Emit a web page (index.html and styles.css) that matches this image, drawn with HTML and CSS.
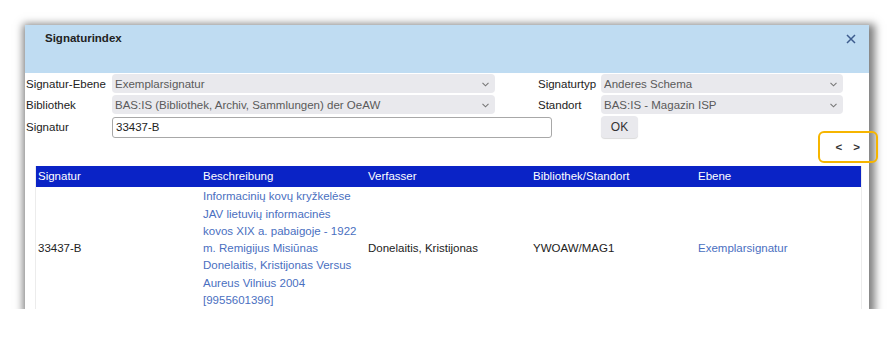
FILE: index.html
```html
<!DOCTYPE html>
<html lang="de">
<head>
    <meta charset="UTF-8">
    <meta name="viewport" content="width=device-width, initial-scale=1.0">
    <title>Signaturindex</title>
    <link rel="stylesheet" href="styles.css">
</head>
<body>
    <div class="dialog">
        <div class="titlebar">
            <span class="title">Signaturindex</span>
            <svg class="close" width="10" height="10" viewBox="0 0 10 10"><path d="M1 1L9 9M9 1L1 9"/></svg>
        </div>

        <form class="search">
            <div class="row">
                <label class="label label-left" for="ebene">Signatur-Ebene</label>
                <div class="select select-left">
                    <select id="ebene"><option>Exemplarsignatur</option></select>
                    <svg class="caret" width="7" height="5" viewBox="0 0 7 5"><path d="M0.5 0.8L3.5 3.8L6.5 0.8"/></svg>
                </div>
                <label class="label label-right" for="typ">Signaturtyp</label>
                <div class="select select-right">
                    <select id="typ"><option>Anderes Schema</option></select>
                    <svg class="caret" width="7" height="5" viewBox="0 0 7 5"><path d="M0.5 0.8L3.5 3.8L6.5 0.8"/></svg>
                </div>
            </div>
            <div class="row">
                <label class="label label-left" for="bibliothek">Bibliothek</label>
                <div class="select select-left">
                    <select id="bibliothek"><option>BAS:IS (Bibliothek, Archiv, Sammlungen) der OeAW</option></select>
                    <svg class="caret" width="7" height="5" viewBox="0 0 7 5"><path d="M0.5 0.8L3.5 3.8L6.5 0.8"/></svg>
                </div>
                <label class="label label-right" for="standort">Standort</label>
                <div class="select select-right">
                    <select id="standort"><option>BAS:IS - Magazin ISP</option></select>
                    <svg class="caret" width="7" height="5" viewBox="0 0 7 5"><path d="M0.5 0.8L3.5 3.8L6.5 0.8"/></svg>
                </div>
            </div>
            <div class="row">
                <label class="label label-left" for="signatur">Signatur</label>
                <input type="text" id="signatur" class="text-input" value="33437-B">
                <button type="button" class="ok">OK</button>
            </div>
        </form>

        <div class="pager">
            <a class="nav">&lt;</a>
            <a class="nav">&gt;</a>
        </div>

        <div class="results">
            <table>
                <thead>
                    <tr>
                        <th>Signatur</th>
                        <th>Beschreibung</th>
                        <th>Verfasser</th>
                        <th>Bibliothek/Standort</th>
                        <th>Ebene</th>
                    </tr>
                </thead>
                <tbody>
                    <tr>
                        <td>33437-B</td>
                        <td><a class="link">Informacinių kovų kryžkelėse JAV lietuvių informacinės kovos XIX a. pabaigoje - 1922 m. Remigijus Misiūnas Donelaitis, Kristijonas Versus Aureus Vilnius 2004 [9955601396]</a></td>
                        <td>Donelaitis, Kristijonas</td>
                        <td>YWOAW/MAG1</td>
                        <td><a class="link">Exemplarsignatur</a></td>
                    </tr>
                </tbody>
            </table>
        </div>
    </div>

    <div class="highlight"></div>
</body>
</html>
```

FILE: styles.css
```css
body {
    margin: 0;
    font-family: "Liberation Sans", Arial, sans-serif;
    font-size: 11.5px;
    color: #222;
    background: #fff;
}
.dialog {
    margin: 25px 0 0 25px;
    width: 844px;
    height: 284px;
    background: #fff;
    box-shadow: 2px 3px 8px 4px rgba(0, 0, 0, 0.5);
    overflow: hidden;
    display: flex;
    flex-direction: column;
}
.titlebar {
    height: 48px;
    box-sizing: border-box;
    background: #bfdcf2;
    display: flex;
    justify-content: space-between;
    align-items: flex-start;
    padding: 5px 13px 0 20px;
    line-height: 17px;
}
.title {
    font-weight: bold;
    color: #222;
}
.close {
    margin-top: 4px;
    fill: none;
    stroke: #3d5c8e;
    stroke-width: 1.5;
}
.search {
    padding: 1px 0 0 1px;
    display: flex;
    flex-direction: column;
    gap: 2px;
}
.row {
    display: flex;
    align-items: center;
}
.label {
    white-space: nowrap;
}
.label-left {
    width: 86px;
}
.label-right {
    width: 63px;
    margin-left: 43px;
}
.select {
    position: relative;
    height: 19px;
}
.select-left {
    width: 383px;
}
.select-right {
    width: 242px;
}
.select select {
    appearance: none;
    width: 100%;
    height: 100%;
    border: none;
    border-radius: 4px;
    background: #e9e9ed;
    color: #5a5a5a;
    font: inherit;
    padding: 0 3px;
    margin: 0;
}
.caret {
    position: absolute;
    right: 6px;
    top: 8px;
    fill: none;
    stroke: #777;
    stroke-width: 1.1;
}
.text-input {
    width: 440px;
    height: 21px;
    box-sizing: border-box;
    border: 1px solid #a8a8a8;
    border-radius: 3px;
    padding: 0 3px;
    font: inherit;
    color: #222;
    margin: 0;
}
.ok {
    margin-left: 49px;
    width: 37px;
    height: 22px;
    border: none;
    border-radius: 4px;
    background: #e9e9ed;
    font-family: inherit;
    font-size: 12px;
    color: #333;
    padding: 0;
    box-shadow: 0 1px 1px rgba(0, 0, 0, 0.15);
}
.pager {
    height: 27px;
    display: flex;
    justify-content: flex-end;
    gap: 11px;
    padding: 1px 9px 0 0;
    line-height: 17px;
}
.nav {
    font-weight: bold;
    font-size: 11.5px;
    color: #333;
    cursor: pointer;
}
.results {
    margin: 0 7px 0 10px;
    border-left: 1px solid #ececec;
    border-right: 1px solid #ececec;
    flex: 1;
    overflow: hidden;
}
table {
    width: 100%;
    border-collapse: collapse;
    table-layout: fixed;
}
th {
    background: #0a23c6;
    color: #fff;
    font-weight: normal;
    text-align: left;
    padding: 2px 5px 2px 2px;
    line-height: 17.3px;
}
td {
    padding: 1px 5px 1px 2px;
    line-height: 17.3px;
    vertical-align: middle;
}
.link {
    color: #4a6fbf;
    cursor: pointer;
}
.highlight {
    position: absolute;
    left: 818px;
    top: 131px;
    width: 60px;
    height: 32px;
    box-sizing: border-box;
    border: 2.5px solid #f6b500;
    border-radius: 6px;
}
```
